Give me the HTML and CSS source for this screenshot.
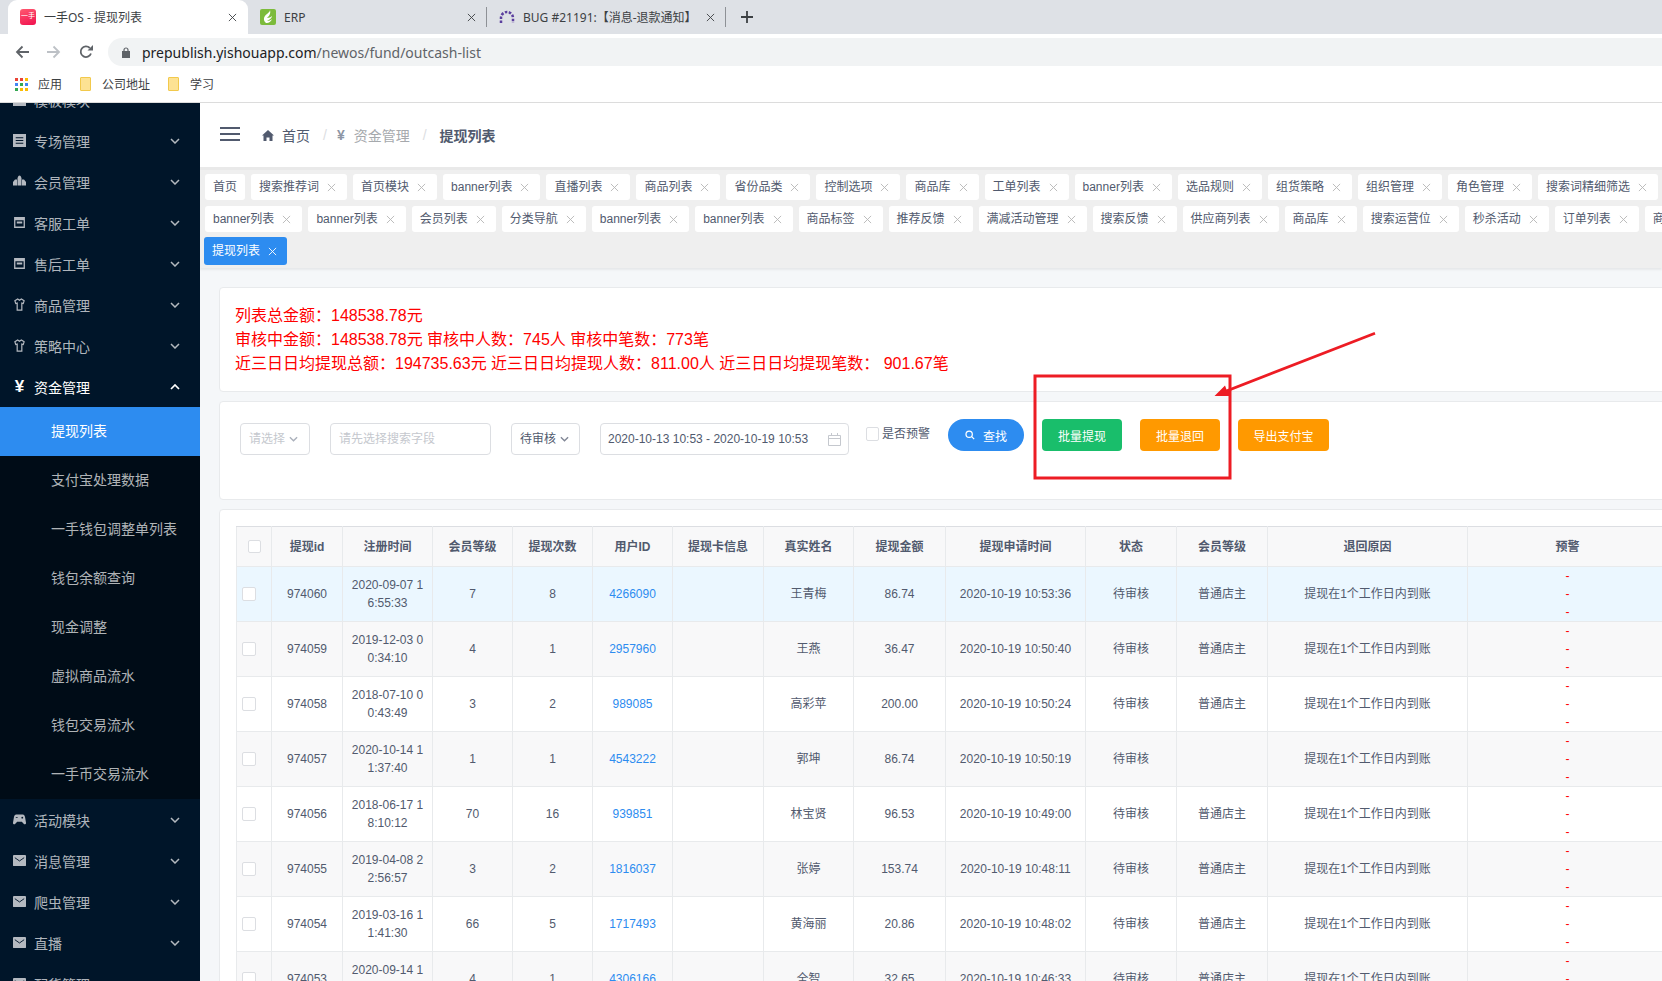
FILE: index.html
```html
<!DOCTYPE html>
<html lang="zh-CN">
<head>
<meta charset="utf-8">
<title>一手OS - 提现列表</title>
<link rel="stylesheet" href="styles.css">
</head>
<body>
<svg class="defs" width="0" height="0" aria-hidden="true">
  <symbol id="i-x" viewBox="0 0 10 10"><path d="M1 1l8 8M9 1l-8 8" fill="none" stroke="currentColor" stroke-width="1"/></symbol>
  <symbol id="i-down" viewBox="0 0 10 6"><path d="M1 1l4 4 4-4" fill="none" stroke="currentColor" stroke-width="1.5"/></symbol>
  <symbol id="i-up" viewBox="0 0 10 6"><path d="M1 5l4-4 4 4" fill="none" stroke="currentColor" stroke-width="1.7"/></symbol>
  <symbol id="i-doc" viewBox="0 0 12 12"><path fill="currentColor" fill-rule="evenodd" d="M0 0h12v12H0zM2.500 3v1h7V3zm0 2.500v1h7v-1zm0 2.500v1h7V8z"/></symbol>
  <symbol id="i-group" viewBox="0 0 13 12"><path fill="currentColor" d="M4.500 2h4v8h-4zM5 1.500a1.500 1.500 0 0 1 3 0v1H5zM0 6.500L2 4h2v6H0zM9 4h2l2 2.500V10H9z"/></symbol>
  <symbol id="i-box" viewBox="0 0 12 12"><path fill="currentColor" fill-rule="evenodd" d="M1 1h10v10H1zM2.200 4v5.800h7.600V4zM3.500 5h5v2h-5z"/></symbol>
  <symbol id="i-shirt" viewBox="0 0 12 14"><path fill="none" stroke="currentColor" stroke-width="1.300" d="M4 1L1 3l1 3 1.500-.5V13h5V5.500L10 6l1-3-3-2-2 1.500z"/></symbol>
  <symbol id="i-mail" viewBox="0 0 14 12"><path fill="currentColor" d="M1 0h12a1 1 0 0 1 1 1v10a1 1 0 0 1-1 1H1a1 1 0 0 1-1-1V1a1 1 0 0 1 1-1z"/><path fill="none" stroke="#001529" stroke-width="1" d="M2 3l5 3.500L12 3"/></symbol>
  <symbol id="i-pad" viewBox="0 0 14 11"><path fill="currentColor" fill-rule="evenodd" d="M3.500 0h7c1.500 0 2 1 2.500 3l1 6c.2 1.500-1.500 2.500-2.500 1L9.500 8h-5l-2 2c-1 1.500-2.700.5-2.500-1l1-6c.5-2 1-3 2.500-3zM9 3.500a1 1 0 1 0 2 0 1 1 0 0 0-2 0zM3 3v1h2V3z"/></symbol>
</svg>

<header class="chrome">
  <div class="tabstrip">
    <div class="tab tab-active">
      <span class="fav fav-pink">一手</span>
      <span class="tab-title">一手OS - 提现列表</span>
      <svg class="tab-x"><use href="#i-x"/></svg>
    </div>
    <div class="tab">
      <svg class="fav" viewBox="0 0 16 16"><rect width="16" height="16" rx="2" fill="#7cbb3b"/><path fill="#fff" d="M10 1c0 3-5 4-6 8-.4 2 .6 4 2 5 2 .6 5-1 6-4-1 1-3 2-5 2 2-1 5-3 5-5-1 1-3 2-5 2 2-2 4-4 3-8z"/></svg>
      <span class="tab-title">ERP</span>
      <svg class="tab-x"><use href="#i-x"/></svg>
    </div>
    <span class="tab-sep"></span>
    <div class="tab tab-short">
      <svg class="fav" viewBox="0 0 16 16"><path d="M2 14V9a6 6 0 0 1 12 0v5" fill="none" stroke="#5b3f9e" stroke-width="2.500" stroke-dasharray="2.500 1.500"/></svg>
      <span class="tab-title">BUG #21191:【消息-退款通知】</span>
      <svg class="tab-x"><use href="#i-x"/></svg>
    </div>
    <span class="tab-sep"></span>
    <svg class="tab-plus" viewBox="0 0 12 12"><path d="M6 0v12M0 6h12" stroke="#3c4043" stroke-width="1.800"/></svg>
  </div>
  <div class="toolbar">
    <svg class="nav-ico" viewBox="0 0 14 14"><path d="M14 7H2M7.500 1.500L2 7l5.500 5.500" fill="none" stroke="#5f6368" stroke-width="1.800"/></svg>
    <svg class="nav-ico nav-next" viewBox="0 0 14 14"><path d="M0 7h12M6.500 1.500L12 7l-5.500 5.500" fill="none" stroke="#bdc1c6" stroke-width="1.800"/></svg>
    <svg class="nav-ico nav-reload" viewBox="0 0 14 14"><path d="M12 8.500A5.300 5.300 0 1 1 10.800 3" fill="none" stroke="#5f6368" stroke-width="1.800"/><path d="M8.500 5.500H14V0z" fill="#5f6368"/></svg>
    <div class="omnibox">
      <svg class="lock" viewBox="0 0 8 11"><path fill="#5f6368" d="M0 4h8v7H0z"/><path fill="none" stroke="#5f6368" stroke-width="1.200" d="M2 4.500V3a2 2 0 0 1 4 0v1.500"/></svg>
      <span class="url">prepublish.yishouapp.com<span class="url-path">/newos/fund/outcash-list</span></span>
    </div>
  </div>
  <div class="bookmarks">
    <svg class="apps" viewBox="0 0 13 13">
      <rect width="3" height="3" fill="#ea4335"/><rect x="5" width="3" height="3" fill="#ea4335"/><rect x="10" width="3" height="3" fill="#fbbc04"/>
      <rect y="5" width="3" height="3" fill="#4285f4"/><rect x="5" y="5" width="3" height="3" fill="#34a853"/><rect x="10" y="5" width="3" height="3" fill="#4285f4"/>
      <rect y="10" width="3" height="3" fill="#34a853"/><rect x="5" y="10" width="3" height="3" fill="#fbbc04"/><rect x="10" y="10" width="3" height="3" fill="#fbbc04"/>
    </svg>
    <span class="bm bm-first">应用</span>
    <span class="folder"></span><span class="bm">公司地址</span>
    <span class="folder folder-b"></span><span class="bm">学习</span>
  </div>
</header>

<div class="app">
  <aside class="sidebar">
    <ul class="menu">
      <li class="mi"><svg class="mi-ico"><use href="#i-doc"/></svg><span class="mi-t">模板模块</span><svg class="chev"><use href="#i-down"/></svg></li>
      <li class="mi"><svg class="mi-ico"><use href="#i-doc"/></svg><span class="mi-t">专场管理</span><svg class="chev"><use href="#i-down"/></svg></li>
      <li class="mi"><svg class="mi-ico"><use href="#i-group"/></svg><span class="mi-t">会员管理</span><svg class="chev"><use href="#i-down"/></svg></li>
      <li class="mi"><svg class="mi-ico"><use href="#i-box"/></svg><span class="mi-t">客服工单</span><svg class="chev"><use href="#i-down"/></svg></li>
      <li class="mi"><svg class="mi-ico"><use href="#i-box"/></svg><span class="mi-t">售后工单</span><svg class="chev"><use href="#i-down"/></svg></li>
      <li class="mi"><svg class="mi-ico"><use href="#i-shirt"/></svg><span class="mi-t">商品管理</span><svg class="chev"><use href="#i-down"/></svg></li>
      <li class="mi"><svg class="mi-ico"><use href="#i-shirt"/></svg><span class="mi-t">策略中心</span><svg class="chev"><use href="#i-down"/></svg></li>
      <li class="mi mi-open"><span class="mi-ico mi-yen">¥</span><span class="mi-t">资金管理</span><svg class="chev"><use href="#i-up"/></svg></li>
      <li class="sub">
        <div class="si si-active">提现列表</div>
        <div class="si">支付宝处理数据</div>
        <div class="si">一手钱包调整单列表</div>
        <div class="si">钱包余额查询</div>
        <div class="si">现金调整</div>
        <div class="si">虚拟商品流水</div>
        <div class="si">钱包交易流水</div>
        <div class="si">一手币交易流水</div>
      </li>
      <li class="mi"><svg class="mi-ico"><use href="#i-pad"/></svg><span class="mi-t">活动模块</span><svg class="chev"><use href="#i-down"/></svg></li>
      <li class="mi"><svg class="mi-ico"><use href="#i-mail"/></svg><span class="mi-t">消息管理</span><svg class="chev"><use href="#i-down"/></svg></li>
      <li class="mi"><svg class="mi-ico"><use href="#i-mail"/></svg><span class="mi-t">爬虫管理</span><svg class="chev"><use href="#i-down"/></svg></li>
      <li class="mi"><svg class="mi-ico"><use href="#i-mail"/></svg><span class="mi-t">直播</span><svg class="chev"><use href="#i-down"/></svg></li>
      <li class="mi"><svg class="mi-ico"><use href="#i-mail"/></svg><span class="mi-t">配货管理</span><svg class="chev"><use href="#i-down"/></svg></li>
    </ul>
  </aside>

  <main class="main">
    <div class="topbar">
      <span class="burger"><i></i><i></i><i></i></span>
      <svg class="home" viewBox="0 0 12 11"><path fill="#515a6e" d="M6 0l6 5.500h-1.500V11H7.500V7.500h-3V11h-3V5.500H0z"/></svg>
      <span class="crumb">首页</span><span class="crumb-sep">/</span>
      <span class="crumb-yen">¥</span><span class="crumb crumb-mid">资金管理</span><span class="crumb-sep">/</span>
      <span class="crumb crumb-cur">提现列表</span>
    </div>

    <div class="tagbar">
      <div class="tagrow">
        <span class="tag tag-home">首页</span>
        <span class="tag">搜索推荐词<svg class="tag-x"><use href="#i-x"/></svg></span>
        <span class="tag">首页模块<svg class="tag-x"><use href="#i-x"/></svg></span>
        <span class="tag">banner列表<svg class="tag-x"><use href="#i-x"/></svg></span>
        <span class="tag">直播列表<svg class="tag-x"><use href="#i-x"/></svg></span>
        <span class="tag">商品列表<svg class="tag-x"><use href="#i-x"/></svg></span>
        <span class="tag">省份品类<svg class="tag-x"><use href="#i-x"/></svg></span>
        <span class="tag">控制选项<svg class="tag-x"><use href="#i-x"/></svg></span>
        <span class="tag">商品库<svg class="tag-x"><use href="#i-x"/></svg></span>
        <span class="tag">工单列表<svg class="tag-x"><use href="#i-x"/></svg></span>
        <span class="tag">banner列表<svg class="tag-x"><use href="#i-x"/></svg></span>
        <span class="tag">选品规则<svg class="tag-x"><use href="#i-x"/></svg></span>
        <span class="tag">组货策略<svg class="tag-x"><use href="#i-x"/></svg></span>
        <span class="tag">组织管理<svg class="tag-x"><use href="#i-x"/></svg></span>
        <span class="tag">角色管理<svg class="tag-x"><use href="#i-x"/></svg></span>
        <span class="tag">搜索词精细筛选<svg class="tag-x"><use href="#i-x"/></svg></span>
        <span class="tag">商品<svg class="tag-x"><use href="#i-x"/></svg></span>
      </div>
      <div class="tagrow">
        <span class="tag">banner列表<svg class="tag-x"><use href="#i-x"/></svg></span>
        <span class="tag">banner列表<svg class="tag-x"><use href="#i-x"/></svg></span>
        <span class="tag">会员列表<svg class="tag-x"><use href="#i-x"/></svg></span>
        <span class="tag">分类导航<svg class="tag-x"><use href="#i-x"/></svg></span>
        <span class="tag">banner列表<svg class="tag-x"><use href="#i-x"/></svg></span>
        <span class="tag">banner列表<svg class="tag-x"><use href="#i-x"/></svg></span>
        <span class="tag">商品标签<svg class="tag-x"><use href="#i-x"/></svg></span>
        <span class="tag">推荐反馈<svg class="tag-x"><use href="#i-x"/></svg></span>
        <span class="tag">满减活动管理<svg class="tag-x"><use href="#i-x"/></svg></span>
        <span class="tag">搜索反馈<svg class="tag-x"><use href="#i-x"/></svg></span>
        <span class="tag">供应商列表<svg class="tag-x"><use href="#i-x"/></svg></span>
        <span class="tag">商品库<svg class="tag-x"><use href="#i-x"/></svg></span>
        <span class="tag">搜索运营位<svg class="tag-x"><use href="#i-x"/></svg></span>
        <span class="tag">秒杀活动<svg class="tag-x"><use href="#i-x"/></svg></span>
        <span class="tag">订单列表<svg class="tag-x"><use href="#i-x"/></svg></span>
        <span class="tag">商品<svg class="tag-x"><use href="#i-x"/></svg></span>
      </div>
      <div class="tagrow tagrow-last">
        <span class="tag tag-active">提现列表<svg class="tag-x"><use href="#i-x"/></svg></span>
      </div>
    </div>

    <div class="content">
      <section class="card card-summary">
        <p>列表总金额：148538.78元</p>
        <p>审核中金额：148538.78元 审核中人数：745人 审核中笔数：773笔</p>
        <p>近三日日均提现总额：194735.63元 近三日日均提现人数：811.00人 近三日日均提现笔数： 901.67笔</p>
      </section>

      <section class="card card-filter">
        <div class="field f-select f-muted">请选择<svg class="f-chev"><use href="#i-down"/></svg></div>
        <div class="field f-input f-muted">请先选择搜索字段</div>
        <div class="field f-status">待审核<svg class="f-chev"><use href="#i-down"/></svg></div>
        <div class="field f-date">2020-10-13 10:53 - 2020-10-19 10:53
          <svg class="cal" viewBox="0 0 13 13"><path fill="none" stroke="#c5c8ce" d="M.5 2.500h12v10H.500zM.5 5.500h12M3.500 0v3M9.500 0v3"/></svg>
        </div>
        <label class="warn"><span class="cb cb-warn"></span>是否预警</label>
        <button class="btn btn-search" type="button"><svg class="mag" viewBox="0 0 12 12"><circle cx="5" cy="5" r="3.800" fill="none" stroke="#fff" stroke-width="1.500"/><path d="M8 8l3 3" stroke="#fff" stroke-width="1.500"/></svg>查找</button>
        <button class="btn btn-green" type="button">批量提现</button>
        <button class="btn btn-orange" type="button">批量退回</button>
        <button class="btn btn-orange btn-wide" type="button">导出支付宝</button>
      </section>

      <section class="card card-table">
        <table class="grid">
          <colgroup>
            <col class="c35"><col class="c71"><col class="c90"><col class="c80"><col class="c80"><col class="c80"><col class="c91"><col class="c90"><col class="c92"><col class="c140"><col class="c91"><col class="c91"><col class="c200"><col class="c200">
          </colgroup>
          <thead>
            <tr><th class="col-check"><span class="cb cb-head"></span></th><th>提现id</th><th>注册时间</th><th>会员等级</th><th>提现次数</th><th>用户ID</th><th>提现卡信息</th><th>真实姓名</th><th>提现金额</th><th>提现申请时间</th><th>状态</th><th>会员等级</th><th>退回原因</th><th>预警</th></tr>
          </thead>
          <tbody>
            <tr class="row-hl"><td class="col-check"><span class="cb"></span></td><td>974060</td><td>2020-09-07 16:55:33</td><td>7</td><td>8</td><td><a class="uid">4266090</a></td><td></td><td>王青梅</td><td>86.74</td><td>2020-10-19 10:53:36</td><td>待审核</td><td>普通店主</td><td>提现在1个工作日内到账</td><td class="warn-col">-<br>-<br>-</td></tr>
            <tr><td class="col-check"><span class="cb"></span></td><td>974059</td><td>2019-12-03 00:34:10</td><td>4</td><td>1</td><td><a class="uid">2957960</a></td><td></td><td>王燕</td><td>36.47</td><td>2020-10-19 10:50:40</td><td>待审核</td><td>普通店主</td><td>提现在1个工作日内到账</td><td class="warn-col">-<br>-<br>-</td></tr>
            <tr><td class="col-check"><span class="cb"></span></td><td>974058</td><td>2018-07-10 00:43:49</td><td>3</td><td>2</td><td><a class="uid">989085</a></td><td></td><td>高彩苹</td><td>200.00</td><td>2020-10-19 10:50:24</td><td>待审核</td><td>普通店主</td><td>提现在1个工作日内到账</td><td class="warn-col">-<br>-<br>-</td></tr>
            <tr><td class="col-check"><span class="cb"></span></td><td>974057</td><td>2020-10-14 11:37:40</td><td>1</td><td>1</td><td><a class="uid">4543222</a></td><td></td><td>郭坤</td><td>86.74</td><td>2020-10-19 10:50:19</td><td>待审核</td><td></td><td>提现在1个工作日内到账</td><td class="warn-col">-<br>-<br>-</td></tr>
            <tr><td class="col-check"><span class="cb"></span></td><td>974056</td><td>2018-06-17 18:10:12</td><td>70</td><td>16</td><td><a class="uid">939851</a></td><td></td><td>林宝贤</td><td>96.53</td><td>2020-10-19 10:49:00</td><td>待审核</td><td>普通店主</td><td>提现在1个工作日内到账</td><td class="warn-col">-<br>-<br>-</td></tr>
            <tr><td class="col-check"><span class="cb"></span></td><td>974055</td><td>2019-04-08 22:56:57</td><td>3</td><td>2</td><td><a class="uid">1816037</a></td><td></td><td>张婷</td><td>153.74</td><td>2020-10-19 10:48:11</td><td>待审核</td><td>普通店主</td><td>提现在1个工作日内到账</td><td class="warn-col">-<br>-<br>-</td></tr>
            <tr><td class="col-check"><span class="cb"></span></td><td>974054</td><td>2019-03-16 11:41:30</td><td>66</td><td>5</td><td><a class="uid">1717493</a></td><td></td><td>黄海丽</td><td>20.86</td><td>2020-10-19 10:48:02</td><td>待审核</td><td>普通店主</td><td>提现在1个工作日内到账</td><td class="warn-col">-<br>-<br>-</td></tr>
            <tr><td class="col-check"><span class="cb"></span></td><td>974053</td><td>2020-09-14 12:20:16</td><td>4</td><td>1</td><td><a class="uid">4306166</a></td><td></td><td>全智</td><td>32.65</td><td>2020-10-19 10:46:33</td><td>待审核</td><td>普通店主</td><td>提现在1个工作日内到账</td><td class="warn-col">-<br>-<br>-</td></tr>
          </tbody>
        </table>
      </section>
    </div>
  </main>
</div>

<svg class="annotation" viewBox="0 0 1662 981" aria-hidden="true">
  <rect x="1035" y="376" width="195" height="102" fill="none" stroke="#ed1c24" stroke-width="3"/>
  <path fill="#ed1c24" d="M1374.500 332l1 2.500L1229 391.500l1.500 4.500H1214.500L1225 385.500l1.500 4z"/>
</svg>
</body>
</html>
```
FILE: styles.css
```css
* { box-sizing: border-box; }
html, body { margin: 0; padding: 0; }
body {
  width: 1662px;
  height: 981px;
  overflow: hidden;
  position: relative;
  background: #fff;
  font-family: "Liberation Sans", "Noto Sans CJK SC", sans-serif;
  font-size: 12px;
  color: #515a6e;
}
.defs { position: absolute; }

/* browser chrome */
.chrome { font-family: "Noto Sans", "Noto Sans CJK SC", sans-serif; color: #3c4043; }
.tabstrip { height: 34px; background: #dee1e6; display: flex; align-items: center; padding-left: 8px; }
.tab { width: 239px; height: 34px; display: flex; align-items: center; padding-left: 12px; flex: none; }
.tab-active { width: 240px; background: #fff; border-radius: 9px 9px 0 0; }
.tab-short { width: 239px; margin-left: 0; }
.fav { width: 16px; height: 16px; flex: none; }
.fav-pink {
  border-radius: 3px;
  background: linear-gradient(160deg, #ff5a70, #f0104f);
  color: #fff;
  font-size: 7px;
  line-height: 13px;
  text-align: center;
  overflow: hidden;
}
.tab-title { margin-left: 8px; font-size: 12px; flex: 1; white-space: nowrap; overflow: hidden; }
.tab-x { width: 9px; height: 9px; margin-right: 11px; color: #3c4043; stroke-width: 2; flex: none; }
.tab-x use { stroke-width: 2; }
.tab-sep { width: 1px; height: 20px; background: #8e9196; flex: none; margin-left: -1px; }
.tab-plus { width: 12px; height: 12px; margin-left: 15px; flex: none; }
.toolbar { height: 32px; display: flex; align-items: center; padding-left: 15px; background: #fff; }
.nav-ico { width: 14px; height: 14px; flex: none; margin-top: 4px; }
.nav-next { margin-left: 18px; }
.nav-reload { margin-left: 18px; }
.omnibox {
  margin-left: 15px;
  margin-top: 4px;
  flex: 1;
  height: 28px;
  border-radius: 14px 0 0 14px;
  background: #f1f3f4;
  display: flex;
  align-items: center;
  padding-left: 14px;
}
.lock { width: 8px; height: 11px; flex: none; }
.url { margin-left: 12px; font-size: 14px; color: #202124; white-space: nowrap; }
.url-path { color: #5f6368; }
.bookmarks { height: 37px; border-bottom: 1px solid #dcdcdc; display: flex; align-items: center; padding-left: 15px; background: #fff; }
.apps { width: 13px; height: 13px; flex: none; }
.bm { font-size: 12px; margin-left: 11px; margin-right: 18px; }
.bm-first { margin-left: 10px; }
.folder { width: 11px; height: 14px; background: #fde293; border: 1px solid #f2c94c; border-radius: 1px; flex: none; }

/* layout */
.app { display: flex; height: 878px; overflow: hidden; }
.sidebar { width: 200px; flex: none; background: #001529; overflow: hidden; }
.menu { list-style: none; margin: -24px 0 0; padding: 0; }
.mi {
  height: 41px;
  display: flex;
  align-items: center;
  padding-left: 13px;
  font-size: 14px;
  color: rgba(255, 255, 255, .7);
}
.mi-open { color: #fff; height: 41px; }
.mi-ico { width: 13px; height: 13px; flex: none; color: #b4b9c0; }
.mi-yen { font-size: 17px; font-weight: 700; color: #fff; line-height: 13px; text-align: center; }
.mi-t { margin-left: 8px; width: 135px; white-space: nowrap; }
.chev { width: 10px; height: 6px; flex: none; margin-left: 1px; }
.sub { background: #000c17; }
.si { height: 49px; line-height: 49px; padding-left: 51px; font-size: 14px; color: rgba(255, 255, 255, .7); white-space: nowrap; }
.si-active { background: #2d8cf0; color: #fff; }

.main { flex: 1; min-width: 0; overflow: hidden; background: #f5f7f9; }
.topbar { height: 64px; background: #fff; display: flex; align-items: center; padding-left: 20px; font-size: 14px; white-space: nowrap; }
.burger { width: 20px; display: flex; flex-direction: column; gap: 4px; margin-top: -3px; }
.burger i { display: block; height: 2px; background: #515a6e; }
.home { width: 12px; height: 11px; margin-left: 22px; flex: none; }
.crumb { margin-left: 8px; color: #515a6e; }
.crumb-mid { color: #a6a9ad; margin-left: 9px; }
.crumb-cur { font-weight: 600; margin-left: 13px; }
.crumb-sep { color: #dcdee2; margin-left: 13px; }
.crumb-yen { color: #8d96a5; margin-left: 10px; font-weight: 700; }

.tagbar {
  height: 101px;
  background: #efefef;
  border-top: 3px solid #e9e9e9;
  padding: 4px 0 0 5px;
  box-shadow: 0 2px 2px rgba(0, 0, 0, .06);
}
.tagrow { display: flex; gap: 6px; height: 26px; margin-bottom: 6px; white-space: nowrap; }
.tagrow-last { height: 28px; margin-top: -1px; margin-left: -1px; }
.tag {
  flex: none;
  height: 26px;
  line-height: 26px;
  background: #fff;
  border-radius: 3px;
  padding: 0 11px 0 8px;
  font-size: 12px;
  color: #515a6e;
  display: flex;
  align-items: center;
}
.tag-home { padding: 0 8px; }
.tag-x { width: 9px; height: 9px; margin-left: 8px; color: #b5b5b5; flex: none; }
.tag-active { height: 28px; background: #2d8cf0; color: #fff; padding: 0 10px 0 8px; }
.tag-active .tag-x { color: #fff; }

.content { width: 1700px; padding: 19px 0 0 19px; }
.card { background: #fff; border: 1px solid #e8eaec; border-radius: 4px; margin-bottom: 9px; }
.card-summary { height: 105px; padding: 16px 15px; color: #f00; font-size: 16px; line-height: 24px; }
.card-summary p { margin: 0; white-space: nowrap; }

.card-filter { height: 99px; padding: 17px 20px 0; display: flex; align-items: flex-start; white-space: nowrap; }
.field {
  height: 32px;
  margin-top: 4px;
  margin-right: 20px;
  border: 1px solid #dcdee2;
  border-radius: 4px;
  font-size: 12px;
  line-height: 30px;
  padding-left: 8px;
  display: flex;
  align-items: center;
  flex: none;
}
.f-muted { color: #c5c8ce; }
.f-select { width: 70px; }
.f-input { width: 161px; }
.f-status { width: 69px; }
.f-date { width: 249px; padding-left: 7px; margin-right: 17px; justify-content: space-between; padding-right: 7px; }
.f-chev { width: 9px; height: 6px; margin-left: 4px; color: #808695; flex: none; }
.f-select .f-chev { color: #aab0bb; }
.cal { width: 13px; height: 13px; flex: none; }
.warn { display: flex; align-items: flex-start; margin-top: 7px; font-size: 12px; line-height: 16px; width: 64px; flex: none; margin-right: 18px; }
.cb { display: block; width: 14px; height: 14px; border: 1px solid #dcdee2; border-radius: 2px; background: #fff; flex: none; }
.cb-warn { width: 13px; margin-top: 1px; margin-right: 3px; }
.btn {
  height: 32px;
  width: 80px;
  border: 0;
  border-radius: 4px;
  margin: 0 18px 0 0;
  padding: 0;
  font: 12px "Liberation Sans", "Noto Sans CJK SC", sans-serif;
  color: #fff;
  flex: none;
}
.btn-search { width: 76px; border-radius: 16px; background: #2d8cf0; display: flex; align-items: center; justify-content: center; }
.mag { width: 10px; height: 10px; margin-right: 8px; }
.btn-green { background: #19be6b; }
.btn-orange { background: #ff9900; }
.btn-wide { width: 91px; }

.card-table { padding: 16px 0 0 16px; }
.grid { border-collapse: collapse; table-layout: fixed; width: 1432px; font-size: 12px; }
.c35 { width: 35px; } .c71 { width: 71px; } .c90 { width: 90px; } .c80 { width: 80px; }
.c91 { width: 91px; } .c92 { width: 92px; } .c140 { width: 140px; } .c200 { width: 200px; }
.grid th, .grid td {
  border: 1px solid #e8eaec;
  padding: 0 8px;
  text-align: center;
  line-height: 18px;
  word-break: break-all;
  vertical-align: middle;
}
.grid th { height: 40px; background: #f8f8f9; font-weight: 700; border-top-color: #dcdee2; white-space: nowrap; }
.grid td { height: 55px; }
.grid tbody tr:nth-child(even) td { background: #f8f8f9; }
.grid tbody tr.row-hl td { background: #ebf7ff; }
.grid .col-check { padding: 0; position: relative; box-shadow: 2px 0 3px rgba(0, 0, 0, .12); }
.grid td.col-check .cb { margin-left: 5px; }
.grid th.col-check .cb { width: 13px; height: 13px; margin: 0 auto 1px; }
.uid { color: #2d8cf0; }
.grid td.warn-col { color: #f00; padding: 0; }

.annotation { position: absolute; left: 0; top: 0; width: 1662px; height: 981px; pointer-events: none; }
```
